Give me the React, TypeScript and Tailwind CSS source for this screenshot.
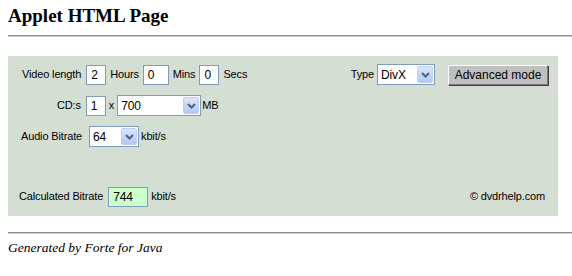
import React from "react";

const sans = { fontFamily: '"Liberation Sans", Arial, sans-serif' };

function Field({ value, w, green }: { value: string; w: string; green?: boolean }) {
  return (
    <div
      className={`${w} h-[20px] border border-[#7f9db9] ${green ? "bg-[#ccffcc]" : "bg-white"} flex items-center pl-[4px] text-[12px] text-black`}
    >
      {value}
    </div>
  );
}

function Chevron() {
  return (
    <svg width="9" height="6" viewBox="0 0 9 6">
      <path d="M1 1 L4.5 4.5 L8 1" stroke="#4d6185" strokeWidth="2" fill="none" />
    </svg>
  );
}

function Combo({ value, w }: { value: string; w: string }) {
  return (
    <div className={`${w} h-[21px] border border-[#7f9db9] bg-white flex items-stretch text-[12px] text-black`}>
      <div className="flex-1 flex items-center pl-[3px]">{value}</div>
      <div className="w-[16px] m-[1px] rounded-[2px] bg-gradient-to-b from-[#dce6fb] to-[#b4c8f5] border border-[#bccff5] flex items-center justify-center">
        <Chevron />
      </div>
    </div>
  );
}

export default function App() {
  return (
    <div className="w-[572px] h-[276px] bg-white overflow-hidden pl-[8px]">
      <div
        className="pt-[5px] text-[19px] leading-[22px] font-bold text-black"
        style={{ fontFamily: '"Liberation Serif", "Times New Roman", serif' }}
      >
        Applet HTML Page
      </div>
      <div className="mt-[8px] h-[2px] border-t border-[#8c8c8c] border-b border-b-[#d0d0d0]" />
      <div className="mt-[19px] w-[550px] h-[160px] bg-[#d5ded3] text-[11px] tracking-[-0.15px] text-black flex flex-col" style={sans}>
        <div className="mt-[8px] flex items-center h-[21px]">
          <span className="ml-[14px]">Video length</span>
          <div className="ml-[5px]"><Field value="2" w="w-[20px]" /></div>
          <span className="ml-[4px]">Hours</span>
          <div className="ml-[4px]"><Field value="0" w="w-[26px]" /></div>
          <span className="ml-[4px]">Mins</span>
          <div className="ml-[4px]"><Field value="0" w="w-[20px]" /></div>
          <span className="ml-[4px]">Secs</span>
          <div className="flex-1" />
          <span>Type</span>
          <div className="ml-[3px]"><Combo value="DivX" w="w-[58px]" /></div>
          <div className="ml-[13px] mr-[10px] w-[100px] h-[20px] bg-[#c0c0c0] border border-t-white border-l-white border-b-[#7a7a7a] border-r-[#7a7a7a] shadow-[1px_1px_0_#404040] flex items-center justify-center text-[12px] tracking-normal">
            Advanced mode
          </div>
        </div>
        <div className="mt-[10px] flex items-center h-[21px]">
          <span className="ml-[49px]">CD:s</span>
          <div className="ml-[5px]"><Field value="1" w="w-[20px]" /></div>
          <span className="ml-[3px]">x</span>
          <div className="ml-[3px]"><Combo value="700" w="w-[84px]" /></div>
          <span className="ml-[1px]">MB</span>
        </div>
        <div className="mt-[10px] flex items-center h-[21px]">
          <span className="ml-[13px]">Audio Bitrate</span>
          <div className="ml-[7px]"><Combo value="64" w="w-[50px]" /></div>
          <span className="ml-[2px]">kbit/s</span>
        </div>
        <div className="mt-[39px] flex items-center h-[21px]">
          <span className="ml-[11px]">Calculated Bitrate</span>
          <div className="ml-[5px]"><Field value="744" w="w-[40px]" green /></div>
          <span className="ml-[3px]">kbit/s</span>
          <div className="flex-1" />
          <span className="mr-[13px]">© dvdrhelp.com</span>
        </div>
      </div>
      <div className="mt-[16px] h-[2px] border-t border-[#8c8c8c] border-b border-b-[#d0d0d0]" />
      <div
        className="mt-[6px] text-[13.5px] leading-[16px] italic text-black"
        style={{ fontFamily: '"Liberation Serif", "Times New Roman", serif' }}
      >
        Generated by Forte for Java
      </div>
    </div>
  );
}
